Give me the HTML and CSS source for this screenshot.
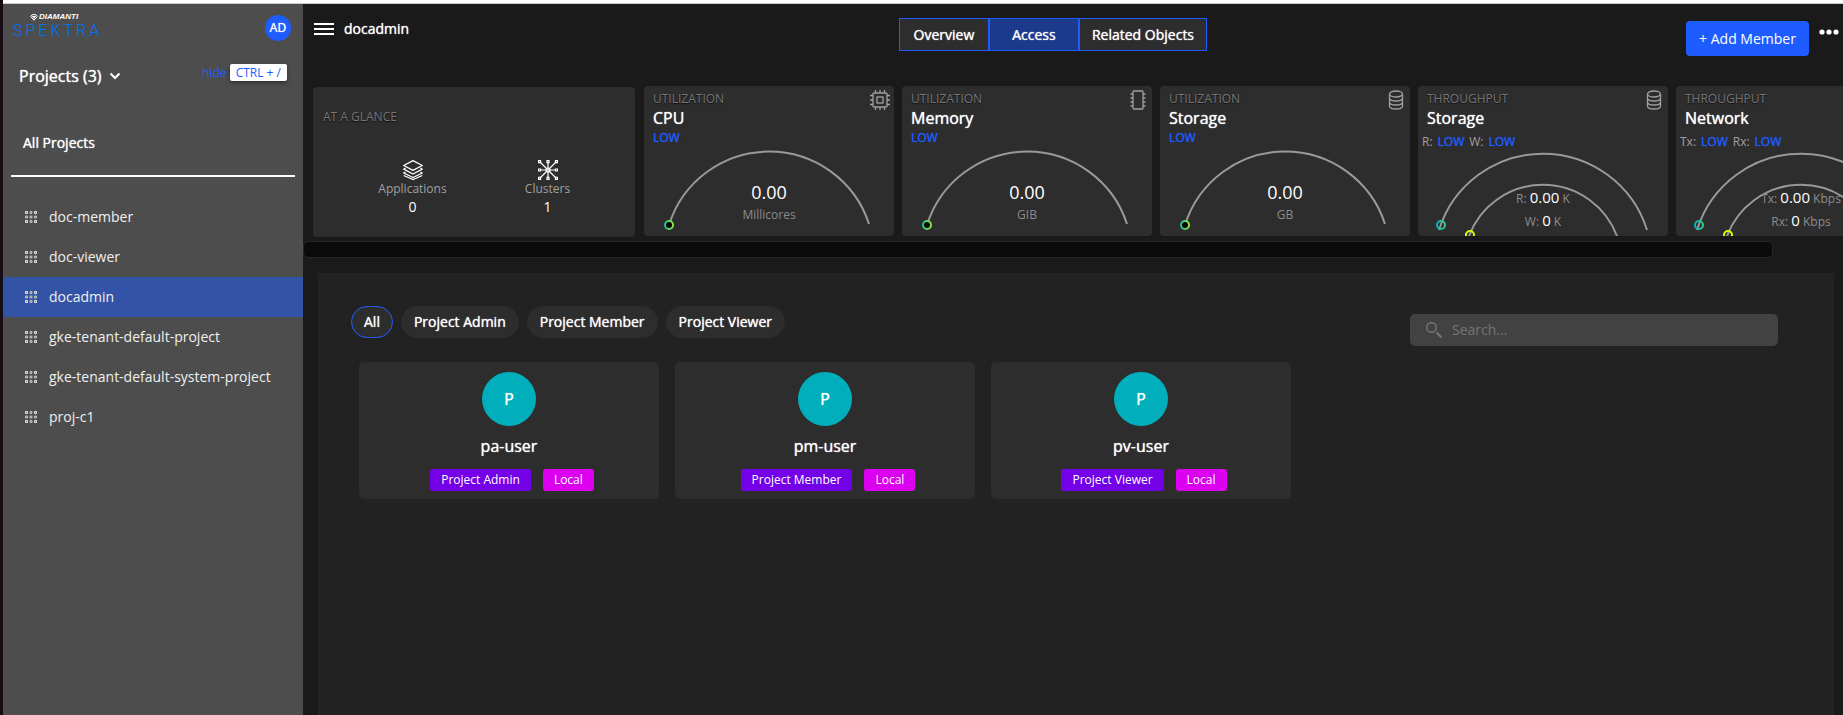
FILE: index.html
```html
<!DOCTYPE html>
<html lang="en">
<head>
  <meta charset="UTF-8">
  <meta name="viewport" content="width=device-width, initial-scale=1.0">
  <title>docadmin - Access</title>
  <link rel="stylesheet" href="styles.css">
</head>
<body>
  <svg width="0" height="0" class="defs" aria-hidden="true">
    <defs>
      <linearGradient id="green"><stop offset="0" stop-color="#1fc492"/><stop offset="1" stop-color="#8fe63c"/></linearGradient>
      <linearGradient id="teal"><stop offset="0" stop-color="#06b3bd"/><stop offset="1" stop-color="#2fcf83"/></linearGradient>
      <symbol id="grid" viewBox="0 0 12 12">
        <path d="M.5.5h2v2h-2zM9.500.5h2v2h-2zM.5 9.500h2v2h-2zM9.500 9.500h2v2h-2z" fill="#777" stroke="#e6e6e6"/>
        <path d="M5 .5h2v2H5zM.5 5h2v2h-2zM9.500 5h2v2h-2zM5 9.500h2v2H5z" fill="#888" stroke="#bdbdbd"/>
        <rect x="4.500" y="4.500" width="3" height="3" fill="#b0b0b0"/>
      </symbol>
      <symbol id="disk" viewBox="0 0 20 20">
        <g fill="none" stroke="#a0a0a0" stroke-width="1.300">
          <ellipse cx="10" cy="4" rx="6.500" ry="3"/>
          <path d="M3.500 4v12c0 1.700 2.900 3 6.500 3s6.500-1.300 6.500-3V4M3.500 8c0 1.700 2.900 3 6.500 3s6.500-1.300 6.500-3M3.500 12c0 1.700 2.900 3 6.500 3s6.500-1.300 6.500-3"/>
        </g>
      </symbol>
    </defs>
  </svg>
  <div class="topline"></div>
  <div class="app">
    <aside class="sidebar">
      <div class="brand-row">
        <div class="brand">
          <span class="brand-top"><svg width="8" height="7" viewBox="0 0 8 7"><path d="M2 .7h4L7.300 2.500 4 6.300.7 2.500zM2.500 2.500h3L4 4.500z" fill="none" stroke="#fff"/></svg>DIAMANTI</span>
          <span class="brand-name">SPEKTRA</span>
        </div>
        <button class="avatar">AD</button>
      </div>
      <div class="projects-row">
        <button class="projects bold">Projects (3)
          <svg width="12" height="8" viewBox="0 0 12 8"><path d="M1.500 1.500 6 6l4.500-4.500" fill="none" stroke="#fff" stroke-width="2"/></svg>
        </button>
        <a href="#" class="hide">hide <kbd>CTRL + /</kbd></a>
      </div>
      <a href="#" class="all bold">All Projects</a>
      <nav class="project-list">
        <a href="#"><svg width="12" height="12"><use href="#grid"/></svg>doc-member</a>
        <a href="#"><svg width="12" height="12"><use href="#grid"/></svg>doc-viewer</a>
        <a href="#" class="active"><svg width="12" height="12"><use href="#grid"/></svg>docadmin</a>
        <a href="#"><svg width="12" height="12"><use href="#grid"/></svg>gke-tenant-default-project</a>
        <a href="#"><svg width="12" height="12"><use href="#grid"/></svg>gke-tenant-default-system-project</a>
        <a href="#"><svg width="12" height="12"><use href="#grid"/></svg>proj-c1</a>
      </nav>
    </aside>

    <main class="main">
      <header class="header">
        <div class="header-grid">
          <div class="crumb">
            <button class="menu" aria-label="Menu"><svg width="20" height="12" viewBox="0 0 20 12"><path d="M0 1h20M0 6h20M0 11h20" stroke="#fff" stroke-width="2"/></svg></button>
            <span class="bold">docadmin</span>
          </div>
          <div class="tabs">
            <button class="bold">Overview</button>
            <button class="bold active">Access</button>
            <button class="bold">Related Objects</button>
          </div>
          <button class="add">+ Add Member</button>
        </div>
        <button class="more" aria-label="More"><svg width="20" height="6" viewBox="0 0 20 6" fill="#fff"><circle cx="3" cy="3" r="2.600"/><circle cx="10" cy="3" r="2.600"/><circle cx="17" cy="3" r="2.600"/></svg></button>
      </header>

      <section class="stats">
        <div class="glance">
          <h3 class="label">AT A GLANCE</h3>
          <div class="glance-items">
            <div class="glance-item">
              <svg width="20" height="20" viewBox="0 0 20 20" fill="none" stroke="#fff" stroke-width="1.300" stroke-linejoin="round"><path d="M10 .7 19.300 5.500 10 10.300.7 5.500zM2.500 8 .7 9.200 10 14l9.300-4.800L17.500 8M2.500 12 .7 13 10 17.500l9.300-4.500-1.800-1"/><path d="M.7 15.500 10 19.500l9.300-4"/></svg>
              <span>Applications</span>
              <b>0</b>
            </div>
            <div class="glance-item">
              <svg width="20" height="20" viewBox="0 0 20 20" fill="none" stroke="#fff" stroke-width="1.200"><path d="M2 2l16 16M18 2 2 18M10 2v16M2 10h16"/><g fill="#2d2d2d"><path d="M.6.6h2v2h-2zM17.400.6h2v2h-2zM.6 17.400h2v2h-2zM17.400 17.400h2v2h-2zM9 .6h2v2H9zM9 17.400h2v2H9zM.6 9h2v2h-2zM17.400 9h2v2h-2z"/></g><circle cx="10" cy="10" r="2" fill="#ccc"/></svg>
              <span>Clusters</span>
              <b>1</b>
            </div>
          </div>
        </div>

        <article class="card">
          <svg class="gauge" viewBox="0 0 250 150">
            <path class="arc" d="M25 139A105 105 0 0 1 225 138"/>
            <circle cx="25" cy="139" r="4" fill="#000" stroke="url(#green)" stroke-width="2"/>
            <text x="125" y="113" class="value">0.00</text>
            <text x="125" y="133" class="unit">Millicores</text>
          </svg>
          <svg class="card-icon" viewBox="0 0 20 20" fill="none" stroke="#a0a0a0" stroke-width="1.300"><rect x="3" y="3" width="14" height="14" rx="1"/><rect x="7" y="7" width="6" height="6"/><path d="M5.500 0v3M10 0v3M14.500 0v3M5.500 17v3M10 17v3M14.500 17v3M0 5.500h3M0 10h3M0 14.500h3M17 5.500h3M17 10h3M17 14.500h3"/></svg>
          <h3 class="label">UTILIZATION</h3>
          <h2 class="bold">CPU</h2>
          <p class="level"><b>LOW</b></p>
        </article>

        <article class="card">
          <svg class="gauge" viewBox="0 0 250 150">
            <path class="arc" d="M25 139A105 105 0 0 1 225 138"/>
            <circle cx="25" cy="139" r="4" fill="#000" stroke="url(#green)" stroke-width="2"/>
            <text x="125" y="113" class="value">0.00</text>
            <text x="125" y="133" class="unit">GIB</text>
          </svg>
          <svg class="card-icon" viewBox="0 0 20 20" fill="none" stroke="#a0a0a0" stroke-width="1.300"><rect x="5" y="1" width="10" height="18" rx="1"/><path d="M2.500 4H5M2.500 8H5M2.500 12H5M2.500 16H5M15 4h2.500M15 8h2.500M15 12h2.500M15 16h2.500"/></svg>
          <h3 class="label">UTILIZATION</h3>
          <h2 class="bold">Memory</h2>
          <p class="level"><b>LOW</b></p>
        </article>

        <article class="card">
          <svg class="gauge" viewBox="0 0 250 150">
            <path class="arc" d="M25 139A105 105 0 0 1 225 138"/>
            <circle cx="25" cy="139" r="4" fill="#000" stroke="url(#green)" stroke-width="2"/>
            <text x="125" y="113" class="value">0.00</text>
            <text x="125" y="133" class="unit">GB</text>
          </svg>
          <svg class="card-icon"><use href="#disk"/></svg>
          <h3 class="label">UTILIZATION</h3>
          <h2 class="bold">Storage</h2>
          <p class="level"><b>LOW</b></p>
        </article>

        <article class="card">
          <svg class="gauge" viewBox="0 0 250 150">
            <path class="arc" d="M21 144A109 109 0 0 1 229 144"/>
            <path class="arc" d="M50 153A79 79 0 0 1 200 153"/>
            <circle cx="23" cy="139" r="4" fill="none" stroke="url(#teal)" stroke-width="2"/>
            <circle cx="52" cy="149" r="4" fill="none" stroke="#d4ff00" stroke-width="2"/>
            <text x="125" y="117" class="unit">R: <tspan class="num">0.00</tspan> K</text>
            <text x="125" y="140" class="unit">W: <tspan class="num">0</tspan> K</text>
          </svg>
          <svg class="card-icon"><use href="#disk"/></svg>
          <h3 class="label">THROUGHPUT</h3>
          <h2 class="bold">Storage</h2>
          <p class="level double">R: <b>LOW</b> W: <b>LOW</b></p>
        </article>

        <article class="card">
          <svg class="gauge" viewBox="0 0 250 150">
            <path class="arc" d="M21 144A109 109 0 0 1 229 144"/>
            <path class="arc" d="M50 153A79 79 0 0 1 200 153"/>
            <circle cx="23" cy="139" r="4" fill="none" stroke="url(#teal)" stroke-width="2"/>
            <circle cx="52" cy="149" r="4" fill="none" stroke="#d4ff00" stroke-width="2"/>
            <text x="125" y="117" class="unit">Tx: <tspan class="num">0.00</tspan> Kbps</text>
            <text x="125" y="140" class="unit">Rx: <tspan class="num">0</tspan> Kbps</text>
          </svg>
          <h3 class="label">THROUGHPUT</h3>
          <h2 class="bold">Network</h2>
          <p class="level double">Tx: <b>LOW</b> Rx: <b>LOW</b></p>
        </article>
      </section>
      <div class="scroll-thumb"></div>

      <section class="panel">
        <div class="toolbar">
          <div class="chips">
            <button class="bold active">All</button>
            <button class="bold">Project Admin</button>
            <button class="bold">Project Member</button>
            <button class="bold">Project Viewer</button>
          </div>
          <label class="search">
            <svg width="16" height="16" viewBox="0 0 16 16" fill="none" stroke="#757575"><circle cx="5.500" cy="5.500" r="4.800" stroke-width="1.500"/><path d="M10.500 10.500l5 5" stroke-width="2"/></svg>
            <input type="text" placeholder="Search..." aria-label="Search">
          </label>
        </div>
        <div class="members">
          <article class="member">
            <div class="member-avatar">P</div>
            <h4 class="bold">pa-user</h4>
            <div class="tags"><span class="tag role">Project Admin</span><span class="tag local">Local</span></div>
          </article>
          <article class="member">
            <div class="member-avatar">P</div>
            <h4 class="bold">pm-user</h4>
            <div class="tags"><span class="tag role">Project Member</span><span class="tag local">Local</span></div>
          </article>
          <article class="member">
            <div class="member-avatar">P</div>
            <h4 class="bold">pv-user</h4>
            <div class="tags"><span class="tag role">Project Viewer</span><span class="tag local">Local</span></div>
          </article>
        </div>
      </section>
    </main>
  </div>
</body>
</html>
```
FILE: styles.css
```css
* {
  box-sizing: border-box;
}
body {
  margin: 0;
  min-height: 100vh;
  display: flex;
  flex-direction: column;
  border-left: 3px solid #170c14;
  background: #1a1a1a;
  color: #fff;
  font-family: "Open Sans", "Noto Sans", sans-serif;
  font-size: 14px;
  line-height: 20px;
}
h2, h3, h4, p {
  margin: 0;
  font-weight: normal;
}
b {
  font-weight: normal;
}
button {
  padding: 0;
  border: 0;
  background: none;
  color: inherit;
  font: inherit;
  cursor: pointer;
}
a {
  color: inherit;
  text-decoration: none;
}
svg {
  display: block;
  flex: none;
}
.defs {
  position: absolute;
}
/* heavier look without changing the letter widths */
.bold {
  text-shadow: 0 0 1px #fff;
}
.topline {
  height: 4px;
  background: #fff;
  border-bottom: 1px solid #ccc;
}
.app {
  flex: 1;
  display: flex;
}

/* sidebar */
.sidebar {
  width: 300px;
  flex: none;
  background: #4d4d4d;
}
.brand-row {
  display: flex;
  justify-content: space-between;
  padding: 9px 12px 0 10px;
}
.brand {
  display: flex;
  flex-direction: column;
}
.brand-top {
  display: flex;
  align-items: center;
  gap: 1px;
  padding-left: 17px;
  font: italic bold 8px/8px "Liberation Sans", sans-serif;
}
.brand-name {
  color: #0073ff;
  font: 300 16px/20px Roboto, sans-serif;
  letter-spacing: 3px;
}
.avatar {
  width: 26px;
  height: 26px;
  margin-top: 2px;
  border-radius: 50%;
  background: #1f5cff;
  font-size: 12px;
  text-shadow: 0 0 1px #fff;
}
.projects-row {
  display: flex;
  justify-content: space-between;
  align-items: flex-start;
  height: 24px;
  margin-top: 22px;
  padding: 0 16px;
}
.projects {
  display: flex;
  align-items: center;
  gap: 7px;
  font-size: 16px;
  line-height: 26px;
}
.hide {
  color: #1f5cff;
  font-size: 12px;
}
kbd {
  display: inline-block;
  padding: 0 6px;
  border-radius: 2px;
  background: #fff;
  box-shadow: 0 2px 4px rgba(0, 0, 0, 0.4);
  font: 12px/17px "Open Sans", sans-serif;
}
.all {
  display: block;
  margin: 32px 8px 0;
  padding: 14px 12px 22px;
  border-bottom: 2px solid #fff;
}
.project-list {
  padding-top: 20px;
}
.project-list a {
  display: flex;
  align-items: center;
  gap: 12px;
  height: 40px;
  padding-left: 22px;
  color: #f0f0f0;
}
.project-list .active {
  background: #3353a6;
}

/* header */
.main {
  flex: 1;
  min-width: 0;
  display: flex;
  flex-direction: column;
}
.header {
  display: flex;
  align-items: flex-start;
  gap: 10px;
  height: 82px;
  padding: 14px 4px 0 0;
}
.header-grid {
  flex: 1;
  display: grid;
  grid-template-columns: 1fr auto 1fr;
  align-items: start;
}
.crumb {
  display: flex;
  align-items: center;
  gap: 10px;
  padding: 1px 0 0 11px;
}
.tabs {
  display: flex;
  margin-right: 6px;
}
.tabs button {
  min-width: 90px;
  height: 33px;
  padding: 0 12px;
  border: 1px solid #1f5cff;
  background: #2d2d2d;
}
.tabs .active {
  background: #1b3a8c;
}
.add {
  justify-self: end;
  width: 123px;
  height: 35px;
  margin-top: 3px;
  border-radius: 4px;
  background: #1f5cff;
}
.more {
  margin-top: 11px;
}

/* gauges */
.stats {
  display: flex;
  gap: 8px;
  padding-left: 10px;
  overflow: hidden;
}
.glance {
  flex: none;
  width: 322px;
  height: 150px;
  margin: 1px 1px 0 0;
  padding: 20px 10px;
  border-radius: 4px;
  background: #2d2d2d;
}
.label {
  color: #757575;
  font-size: 12px;
  text-shadow: 0 1px 1px #111;
}
.glance-items {
  display: flex;
  padding: 33px 10px 0 22px;
}
.glance-item {
  flex: 1;
  display: flex;
  flex-direction: column;
  align-items: center;
  color: #a0a0a0;
  font-size: 12px;
  line-height: 18px;
}
.glance-item b {
  color: #fff;
  font-size: 14px;
}
.card {
  position: relative;
  flex: none;
  width: 250px;
  height: 150px;
  padding: 3px 9px;
  border-radius: 4px;
  background: #2d2d2d;
  overflow: hidden;
}
.card h2 {
  font-size: 16px;
  line-height: 18px;
}
.level {
  color: #a0a0a0;
  font-size: 12px;
  line-height: 22px;
}
.level b {
  color: #1f5cff;
  text-shadow: 0 0 1px #1f5cff;
}
.double {
  display: flex;
  gap: 5px;
  margin: 4px 0 0 -5px;
}
.card-icon {
  position: absolute;
  top: 4px;
  right: 4px;
  width: 20px;
  height: 20px;
}
.gauge {
  position: absolute;
  inset: 0;
}
.arc {
  fill: none;
  stroke: #999;
  stroke-width: 2;
}
.gauge text {
  text-anchor: middle;
}
.value {
  fill: #fff;
  font-size: 18px;
}
.unit {
  fill: #8c8c8c;
  font-size: 12px;
}
.num {
  fill: #fff;
  font-size: 15px;
}
.scroll-thumb {
  height: 17px;
  margin: 4px 70px 0 0;
  border: 1px solid #262626;
  border-radius: 5px;
  background: #0b0b0b;
}

/* members */
.panel {
  flex: 1;
  margin: 15px 9px 0 15px;
  padding: 33px 56px 20px 33px;
  background: #222;
}
.toolbar {
  display: flex;
  justify-content: space-between;
}
.chips {
  display: flex;
  gap: 8px;
}
.chips button {
  height: 32px;
  padding: 0 12px;
  border: 1px solid #2d2d2d;
  border-radius: 16px;
  background: #2d2d2d;
}
.chips .active {
  border-color: #1f5cff;
}
.search {
  display: flex;
  align-items: center;
  gap: 10px;
  width: 368px;
  height: 32px;
  margin-top: 8px;
  padding: 0 16px;
  border-radius: 5px;
  background: #424242;
}
.search input {
  flex: 1;
  min-width: 0;
  padding: 0;
  border: 0;
  outline: 0;
  background: none;
  color: #fff;
  font: inherit;
}
.search input::placeholder {
  color: #757575;
}
.members {
  display: flex;
  flex-wrap: wrap;
  gap: 16px;
  padding: 16px 8px;
}
.member {
  display: flex;
  flex-direction: column;
  align-items: center;
  width: 300px;
  padding: 10px 0 8px;
  border-radius: 5px;
  background: #2d2d2d;
}
.member-avatar {
  width: 54px;
  height: 54px;
  border-radius: 50%;
  background: #00afbb;
  font-size: 16px;
  line-height: 54px;
  text-align: center;
  text-shadow: 0 0 1px #fff;
}
.member h4 {
  margin: 10px 0 13px;
  font-size: 16px;
}
.tags {
  display: flex;
}
.tag {
  height: 22px;
  margin: 0 3px 0 9px;
  padding: 0 11px;
  border-radius: 3px;
  font-size: 12px;
  line-height: 22px;
}
.role {
  background: #7300e6;
}
.local {
  background: #dc00f0;
}
```
